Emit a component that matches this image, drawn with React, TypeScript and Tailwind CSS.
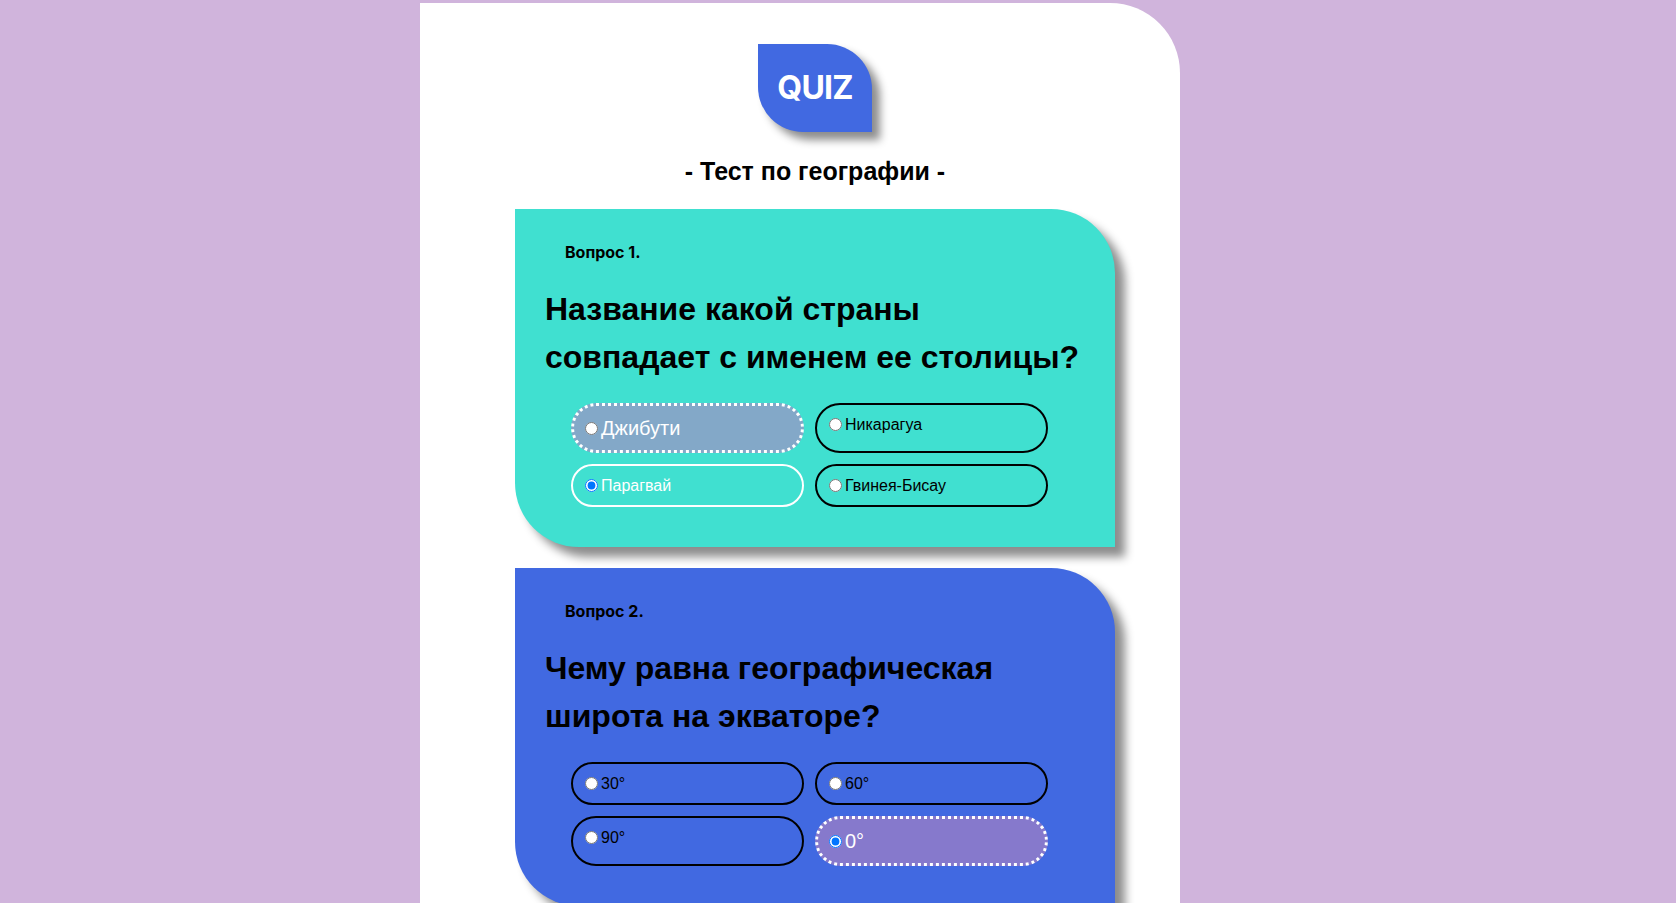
import React from 'react';

type Option = {
  label: string;
  checked?: boolean;
  variant?: 'plain' | 'picked' | 'hover';
};

type Question = {
  num: number;
  text: string[];
  bg: string;
  hoverBg: string;
  options: Option[];
};

const questions: Question[] = [
  {
    num: 1,
    text: ['Название какой страны', 'совпадает с именем ее столицы?'],
    bg: 'bg-[#40e0d0]',
    hoverBg: 'bg-[#83a8c8]',
    options: [
      { label: 'Джибути', variant: 'hover' },
      { label: 'Никарагуа' },
      { label: 'Парагвай', checked: true, variant: 'picked' },
      { label: 'Гвинея-Бисау' },
    ],
  },
  {
    num: 2,
    text: ['Чему равна географическая', 'широта на экваторе?'],
    bg: 'bg-[#4169e1]',
    hoverBg: 'bg-[#8679cc]',
    options: [
      { label: '30°' },
      { label: '60°' },
      { label: '90°' },
      { label: '0°', checked: true, variant: 'hover' },
    ],
  },
];

const sans = { fontFamily: '"Liberation Sans", Arial, sans-serif' };

const OptionBox = ({ opt, name, hoverBg }: { opt: Option; name: string; hoverBg: string }) => {
  const v = opt.variant ?? 'plain';
  const box =
    v === 'hover'
      ? `border-[3px] border-dotted border-white text-white text-[20px] leading-6 px-[6px] ${hoverBg}`
      : v === 'picked'
        ? 'border-2 border-white text-white text-base leading-[19px] px-[7px]'
        : 'border-2 border-black text-black text-base leading-[19px] px-[7px]';

  return (
    <label className={`block rounded-full py-[10px] ${box}`} style={sans}>
      <span className="flex items-center">
        <input
          type="radio"
          name={name}
          defaultChecked={opt.checked}
          className="w-[13px] h-[13px] ml-[5px] mr-[3px] shrink-0"
        />
        <span>{opt.label}</span>
      </span>
    </label>
  );
};

const QuestionCard = ({ q }: { q: Question }) => (
  <div
    className={`w-[600px] ${q.bg} rounded-tr-[64px] rounded-bl-[64px] shadow-[10px_10px_10px_rgba(0,0,0,0.45)] pt-[33px] pb-10`}
  >
    <div className="pl-[50px] text-base leading-5 font-bold text-black" style={{ fontFamily: 'Inter, sans-serif' }}>
      Вопрос {q.num}.
    </div>
    <h2 className="mt-[23px] pl-[30px] text-[32px] leading-[48px] font-bold text-black" style={sans}>
      {q.text.map((line) => (
        <div key={line}>{line}</div>
      ))}
    </h2>
    <div className="mt-[22px] ml-[56px] grid grid-cols-[233px_233px] gap-x-[11px] gap-y-[11px]">
      {q.options.map((opt) => (
        <OptionBox key={opt.label} opt={opt} name={`q${q.num}`} hoverBg={q.hoverBg} />
      ))}
    </div>
  </div>
);

export default function App() {
  return (
    <div className="min-h-screen bg-[#d0b4dc] pt-[3px] overflow-hidden">
      <div className="ml-[420px] w-[760px] min-h-[920px] bg-white rounded-tr-[70px] pl-[95px] pr-[65px] flex flex-col items-center">
        <div className="mt-[41px] w-[114px] h-[88px] bg-[#4169e1] rounded-tr-[45px] rounded-bl-[45px] shadow-[8px_8px_8px_rgba(0,0,0,0.45)] flex items-center justify-center">
          <span className="text-white text-[32px] font-bold tracking-tight" style={{ fontFamily: 'Inter, sans-serif' }}>
            QUIZ
          </span>
        </div>
        <h1 className="mt-[25px] text-[25px] leading-[28px] font-bold text-black" style={sans}>
          - Тест по географии -
        </h1>
        <div className="mt-[24px] flex flex-col gap-[21px]">
          {questions.map((q) => (
            <QuestionCard key={q.num} q={q} />
          ))}
        </div>
      </div>
    </div>
  );
}
